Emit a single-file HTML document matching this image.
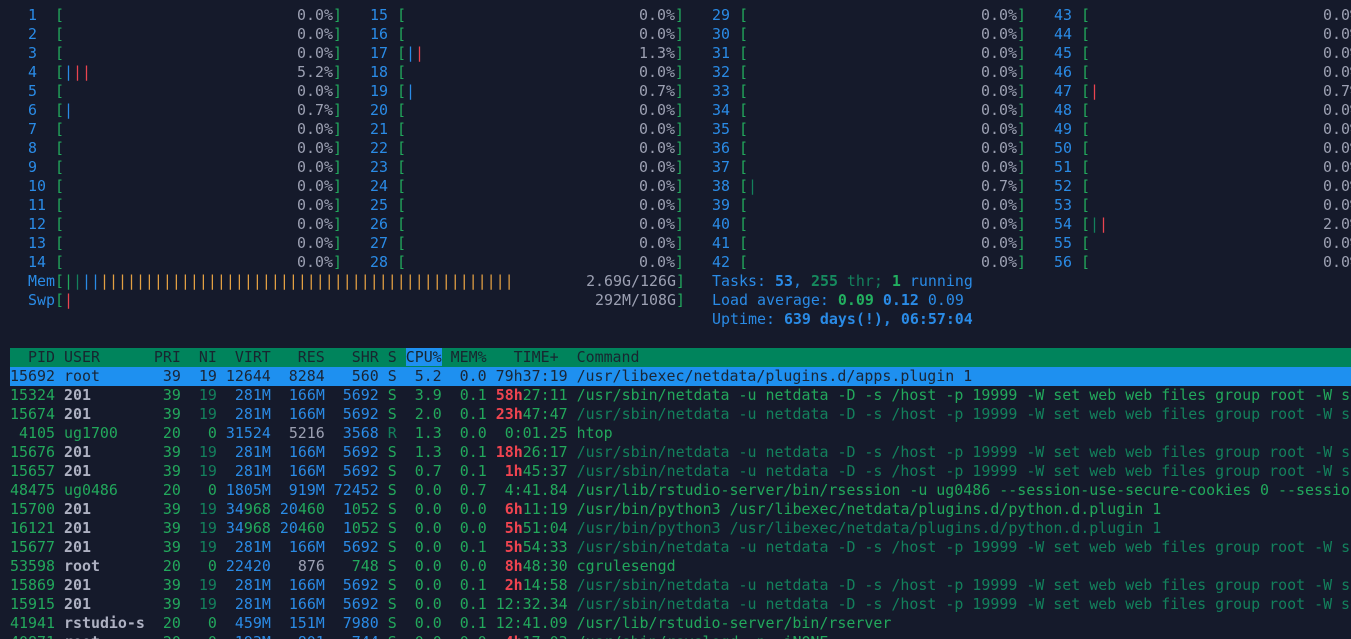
<!DOCTYPE html>
<html><head><meta charset="utf-8">
<style>
html,body{margin:0;padding:0;background:#151a2b;width:1351px;height:639px;overflow:hidden}
body{font-family:"DejaVu Sans Mono","Liberation Mono",monospace;font-size:14.95px;line-height:19px;color:#9ca0b2;position:relative}
.m{position:absolute;width:332px;height:19px;white-space:pre}
.m .r{position:absolute;right:0;top:0}
.b{color:#2a8be6}.g{color:#22a85c}.dg{color:#13805c}.rd{color:#ea4450}.o{color:#e3a043}.gr{color:#9ca0b2}
.bb{color:#2a8be6;font-weight:bold}.bg{color:#22b060;font-weight:bold}.bdg{color:#168a5e;font-weight:bold}
.u{color:#aeb1c2;font-weight:bold}.br{color:#ef4450;font-weight:bold}
.l{position:absolute;left:10px;width:1400px;height:19px;white-space:pre;color:#22a85c}
.hd{background:#00845c;color:#182630}
.sel{background:#1e90f0;color:#1a2535}
.cs{background:#1e90f0}
.t{color:#13805c}
</style></head><body>
<div class="m" style="left:10px;top:6px"><span class="b">  1  </span><span class="g">[</span><span class="r">0.0%<span class="g">]</span></span></div>
<div class="m" style="left:10px;top:25px"><span class="b">  2  </span><span class="g">[</span><span class="r">0.0%<span class="g">]</span></span></div>
<div class="m" style="left:10px;top:44px"><span class="b">  3  </span><span class="g">[</span><span class="r">0.0%<span class="g">]</span></span></div>
<div class="m" style="left:10px;top:63px"><span class="b">  4  </span><span class="g">[</span><span class="b">|</span><span class="rd">||</span><span class="r">5.2%<span class="g">]</span></span></div>
<div class="m" style="left:10px;top:82px"><span class="b">  5  </span><span class="g">[</span><span class="r">0.0%<span class="g">]</span></span></div>
<div class="m" style="left:10px;top:101px"><span class="b">  6  </span><span class="g">[</span><span class="b">|</span><span class="r">0.7%<span class="g">]</span></span></div>
<div class="m" style="left:10px;top:120px"><span class="b">  7  </span><span class="g">[</span><span class="r">0.0%<span class="g">]</span></span></div>
<div class="m" style="left:10px;top:139px"><span class="b">  8  </span><span class="g">[</span><span class="r">0.0%<span class="g">]</span></span></div>
<div class="m" style="left:10px;top:158px"><span class="b">  9  </span><span class="g">[</span><span class="r">0.0%<span class="g">]</span></span></div>
<div class="m" style="left:10px;top:177px"><span class="b">  10 </span><span class="g">[</span><span class="r">0.0%<span class="g">]</span></span></div>
<div class="m" style="left:10px;top:196px"><span class="b">  11 </span><span class="g">[</span><span class="r">0.0%<span class="g">]</span></span></div>
<div class="m" style="left:10px;top:215px"><span class="b">  12 </span><span class="g">[</span><span class="r">0.0%<span class="g">]</span></span></div>
<div class="m" style="left:10px;top:234px"><span class="b">  13 </span><span class="g">[</span><span class="r">0.0%<span class="g">]</span></span></div>
<div class="m" style="left:10px;top:253px"><span class="b">  14 </span><span class="g">[</span><span class="r">0.0%<span class="g">]</span></span></div>

<div class="m" style="left:352px;top:6px"><span class="b">  15 </span><span class="g">[</span><span class="r">0.0%<span class="g">]</span></span></div>
<div class="m" style="left:352px;top:25px"><span class="b">  16 </span><span class="g">[</span><span class="r">0.0%<span class="g">]</span></span></div>
<div class="m" style="left:352px;top:44px"><span class="b">  17 </span><span class="g">[</span><span class="b">|</span><span class="rd">|</span><span class="r">1.3%<span class="g">]</span></span></div>
<div class="m" style="left:352px;top:63px"><span class="b">  18 </span><span class="g">[</span><span class="r">0.0%<span class="g">]</span></span></div>
<div class="m" style="left:352px;top:82px"><span class="b">  19 </span><span class="g">[</span><span class="b">|</span><span class="r">0.7%<span class="g">]</span></span></div>
<div class="m" style="left:352px;top:101px"><span class="b">  20 </span><span class="g">[</span><span class="r">0.0%<span class="g">]</span></span></div>
<div class="m" style="left:352px;top:120px"><span class="b">  21 </span><span class="g">[</span><span class="r">0.0%<span class="g">]</span></span></div>
<div class="m" style="left:352px;top:139px"><span class="b">  22 </span><span class="g">[</span><span class="r">0.0%<span class="g">]</span></span></div>
<div class="m" style="left:352px;top:158px"><span class="b">  23 </span><span class="g">[</span><span class="r">0.0%<span class="g">]</span></span></div>
<div class="m" style="left:352px;top:177px"><span class="b">  24 </span><span class="g">[</span><span class="r">0.0%<span class="g">]</span></span></div>
<div class="m" style="left:352px;top:196px"><span class="b">  25 </span><span class="g">[</span><span class="r">0.0%<span class="g">]</span></span></div>
<div class="m" style="left:352px;top:215px"><span class="b">  26 </span><span class="g">[</span><span class="r">0.0%<span class="g">]</span></span></div>
<div class="m" style="left:352px;top:234px"><span class="b">  27 </span><span class="g">[</span><span class="r">0.0%<span class="g">]</span></span></div>
<div class="m" style="left:352px;top:253px"><span class="b">  28 </span><span class="g">[</span><span class="r">0.0%<span class="g">]</span></span></div>

<div class="m" style="left:694px;top:6px"><span class="b">  29 </span><span class="g">[</span><span class="r">0.0%<span class="g">]</span></span></div>
<div class="m" style="left:694px;top:25px"><span class="b">  30 </span><span class="g">[</span><span class="r">0.0%<span class="g">]</span></span></div>
<div class="m" style="left:694px;top:44px"><span class="b">  31 </span><span class="g">[</span><span class="r">0.0%<span class="g">]</span></span></div>
<div class="m" style="left:694px;top:63px"><span class="b">  32 </span><span class="g">[</span><span class="r">0.0%<span class="g">]</span></span></div>
<div class="m" style="left:694px;top:82px"><span class="b">  33 </span><span class="g">[</span><span class="r">0.0%<span class="g">]</span></span></div>
<div class="m" style="left:694px;top:101px"><span class="b">  34 </span><span class="g">[</span><span class="r">0.0%<span class="g">]</span></span></div>
<div class="m" style="left:694px;top:120px"><span class="b">  35 </span><span class="g">[</span><span class="r">0.0%<span class="g">]</span></span></div>
<div class="m" style="left:694px;top:139px"><span class="b">  36 </span><span class="g">[</span><span class="r">0.0%<span class="g">]</span></span></div>
<div class="m" style="left:694px;top:158px"><span class="b">  37 </span><span class="g">[</span><span class="r">0.0%<span class="g">]</span></span></div>
<div class="m" style="left:694px;top:177px"><span class="b">  38 </span><span class="g">[</span><span class="dg">|</span><span class="r">0.7%<span class="g">]</span></span></div>
<div class="m" style="left:694px;top:196px"><span class="b">  39 </span><span class="g">[</span><span class="r">0.0%<span class="g">]</span></span></div>
<div class="m" style="left:694px;top:215px"><span class="b">  40 </span><span class="g">[</span><span class="r">0.0%<span class="g">]</span></span></div>
<div class="m" style="left:694px;top:234px"><span class="b">  41 </span><span class="g">[</span><span class="r">0.0%<span class="g">]</span></span></div>
<div class="m" style="left:694px;top:253px"><span class="b">  42 </span><span class="g">[</span><span class="r">0.0%<span class="g">]</span></span></div>

<div class="m" style="left:1036px;top:6px"><span class="b">  43 </span><span class="g">[</span><span class="r">0.0%<span class="g">]</span></span></div>
<div class="m" style="left:1036px;top:25px"><span class="b">  44 </span><span class="g">[</span><span class="r">0.0%<span class="g">]</span></span></div>
<div class="m" style="left:1036px;top:44px"><span class="b">  45 </span><span class="g">[</span><span class="r">0.0%<span class="g">]</span></span></div>
<div class="m" style="left:1036px;top:63px"><span class="b">  46 </span><span class="g">[</span><span class="r">0.0%<span class="g">]</span></span></div>
<div class="m" style="left:1036px;top:82px"><span class="b">  47 </span><span class="g">[</span><span class="rd">|</span><span class="r">0.7%<span class="g">]</span></span></div>
<div class="m" style="left:1036px;top:101px"><span class="b">  48 </span><span class="g">[</span><span class="r">0.0%<span class="g">]</span></span></div>
<div class="m" style="left:1036px;top:120px"><span class="b">  49 </span><span class="g">[</span><span class="r">0.0%<span class="g">]</span></span></div>
<div class="m" style="left:1036px;top:139px"><span class="b">  50 </span><span class="g">[</span><span class="r">0.0%<span class="g">]</span></span></div>
<div class="m" style="left:1036px;top:158px"><span class="b">  51 </span><span class="g">[</span><span class="r">0.0%<span class="g">]</span></span></div>
<div class="m" style="left:1036px;top:177px"><span class="b">  52 </span><span class="g">[</span><span class="r">0.0%<span class="g">]</span></span></div>
<div class="m" style="left:1036px;top:196px"><span class="b">  53 </span><span class="g">[</span><span class="r">0.0%<span class="g">]</span></span></div>
<div class="m" style="left:1036px;top:215px"><span class="b">  54 </span><span class="g">[</span><span class="dg">|</span><span class="rd">|</span><span class="r">2.0%<span class="g">]</span></span></div>
<div class="m" style="left:1036px;top:234px"><span class="b">  55 </span><span class="g">[</span><span class="r">0.0%<span class="g">]</span></span></div>
<div class="m" style="left:1036px;top:253px"><span class="b">  56 </span><span class="g">[</span><span class="r">0.0%<span class="g">]</span></span></div>

<div class="m" style="left:10px;top:272px;width:675px"><span class="b">  Mem</span><span class="g">[</span><span class="g">|</span><span class="dg">|</span><span class="b">||</span><span class="o">||||||||||||||||||||||||||||||||||||||||||||||</span><span class="r">2.69G/126G<span class="g">]</span></span></div>
<div class="m" style="left:10px;top:291px;width:675px"><span class="b">  Swp</span><span class="g">[</span><span class="rd">|</span><span class="r">292M/108G<span class="g">]</span></span></div>

<div class="m" style="left:694px;top:272px;width:600px"><span class="b">  Tasks: </span><span class="bb">53</span><span class="b">, </span><span class="bdg">255</span><span class="dg"> thr; </span><span class="bg">1</span><span class="b"> running</span></div>
<div class="m" style="left:694px;top:291px;width:600px"><span class="b">  Load average: </span><span class="bg">0.09</span> <span class="bb">0.12</span> <span class="b">0.09</span></div>
<div class="m" style="left:694px;top:310px;width:600px"><span class="b">  Uptime: </span><span class="bb">639 days(!), 06:57:04</span></div>

<div class="l hd" style="top:348px;width:1341px">  PID USER      PRI  NI  VIRT   RES   SHR S <span class="cs">CPU%</span> MEM%   TIME+  Command</div>
<div class="l sel" style="top:367px;width:1341px">15692 root       39  19 12644  8284   560 S  5.2  0.0 79h37:19 /usr/libexec/netdata/plugins.d/apps.plugin 1</div>
<div class="l" style="top:386px">15324 <span class="u">201      </span>  39  <span class="dg">19</span>  <span class="b">281M  166M  5692</span> S  3.9  0.1 <span class="br">58h</span>27:11 /usr/sbin/netdata -u netdata -D -s /host -p 19999 -W set web web files group root -W set</div>
<div class="l" style="top:405px">15674 <span class="u">201      </span>  39  <span class="dg">19</span>  <span class="b">281M  166M  5692</span> S  2.0  0.1 <span class="br">23h</span>47:47 <span class="t">/usr/sbin/netdata -u netdata -D -s /host -p 19999 -W set web web files group root -W set</span></div>
<div class="l" style="top:424px"> 4105 ug1700     20   0 <span class="b">31524</span>  <span class="gr">5216</span>  <span class="b">3568</span> <span class="t">R</span>  1.3  0.0  0:01.25 htop</div>
<div class="l" style="top:443px">15676 <span class="u">201      </span>  39  <span class="dg">19</span>  <span class="b">281M  166M  5692</span> S  1.3  0.1 <span class="br">18h</span>26:17 <span class="t">/usr/sbin/netdata -u netdata -D -s /host -p 19999 -W set web web files group root -W set</span></div>
<div class="l" style="top:462px">15657 <span class="u">201      </span>  39  <span class="dg">19</span>  <span class="b">281M  166M  5692</span> S  0.7  0.1  <span class="br">1h</span>45:37 <span class="t">/usr/sbin/netdata -u netdata -D -s /host -p 19999 -W set web web files group root -W set</span></div>
<div class="l" style="top:481px">48475 ug0486     20   0 <span class="b">1805M  919M 72452</span> S  0.0  0.7  4:41.84 /usr/lib/rstudio-server/bin/rsession -u ug0486 --session-use-secure-cookies 0 --session</div>
<div class="l" style="top:500px">15700 <span class="u">201      </span>  39  <span class="dg">19</span> <span class="b">34</span>968 <span class="b">20</span>460  <span class="b">1</span>052 S  0.0  0.0  <span class="br">6h</span>11:19 /usr/bin/python3 /usr/libexec/netdata/plugins.d/python.d.plugin 1</div>
<div class="l" style="top:519px">16121 <span class="u">201      </span>  39  <span class="dg">19</span> <span class="b">34</span>968 <span class="b">20</span>460  <span class="b">1</span>052 S  0.0  0.0  <span class="br">5h</span>51:04 <span class="t">/usr/bin/python3 /usr/libexec/netdata/plugins.d/python.d.plugin 1</span></div>
<div class="l" style="top:538px">15677 <span class="u">201      </span>  39  <span class="dg">19</span>  <span class="b">281M  166M  5692</span> S  0.0  0.1  <span class="br">5h</span>54:33 <span class="t">/usr/sbin/netdata -u netdata -D -s /host -p 19999 -W set web web files group root -W set</span></div>
<div class="l" style="top:557px">53598 <span class="u">root     </span>  20   0 <span class="b">22420</span>   <span class="gr">876</span>   748 S  0.0  0.0  <span class="br">8h</span>48:30 cgrulesengd</div>
<div class="l" style="top:576px">15869 <span class="u">201      </span>  39  <span class="dg">19</span>  <span class="b">281M  166M  5692</span> S  0.0  0.1  <span class="br">2h</span>14:58 <span class="t">/usr/sbin/netdata -u netdata -D -s /host -p 19999 -W set web web files group root -W set</span></div>
<div class="l" style="top:595px">15915 <span class="u">201      </span>  39  <span class="dg">19</span>  <span class="b">281M  166M  5692</span> S  0.0  0.1 12:32.34 <span class="t">/usr/sbin/netdata -u netdata -D -s /host -p 19999 -W set web web files group root -W set</span></div>
<div class="l" style="top:614px">41941 <span class="u">rstudio-s</span>  20   0  <span class="b">459M  151M  7980</span> S  0.0  0.1 12:41.09 /usr/lib/rstudio-server/bin/rserver</div>
<div class="l" style="top:633px">40871 <span class="u">root     </span>  20   0  <span class="b">193M   801   744</span> S  0.0  0.0  <span class="br">4h</span>17:03 /usr/sbin/rsyslogd -n -iNONE</div>
</body></html>
